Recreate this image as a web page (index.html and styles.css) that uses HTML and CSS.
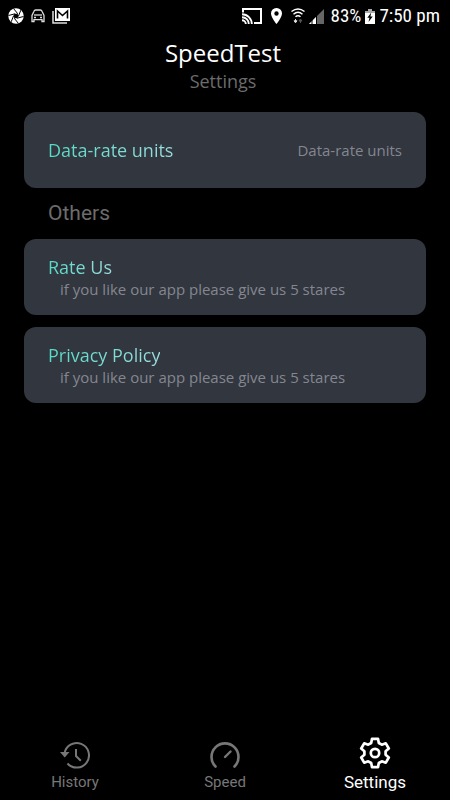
FILE: index.html
```html
<!DOCTYPE html>
<html lang="en">
    <head>
        <meta charset="utf-8">
        <meta name="viewport" content="width=device-width, initial-scale=1">
        <title>SpeedTest</title>
        <link rel="stylesheet" href="styles.css">
    </head>

    <body>
        <div class="status">
            <div class="notifications">
                <svg width="16" height="16" viewBox="0 0 16 16">
                    <circle cx="8" cy="8" r="7.7" fill="#fff"/>
                    <path d="M5.5 .5L9.8 5.8M12.8 2.2L10.4 8.3M15.5 8.5L9 10.2M10.5 15.5L6.2 10.2M3.2 13.8L5.6 7.7M.5 7.5L7 5.8" stroke="#000"/>
                    <path d="M6.6 5.8h2.9l1.1 2.2-1.3 2.2H6.5L5.4 8z" fill="#000"/>
                </svg>
                <svg width="14" height="14" viewBox="0 0 14 14" fill="none" stroke="#ddd" stroke-width="1.3">
                    <path d="M1 12.5v-6l2-4.3Q3.4 1 4.6 1h4.8q1.2 0 1.6 1.2l2 4.3v6h-2v-1.8H3v1.8z"/>
                    <path d="M3 6h8"/>
                    <path d="M3 8.5h2M9 8.5h2"/>
                </svg>
                <svg width="18" height="16" viewBox="0 0 18 16" fill="none">
                    <path d="M1 3v12h14" stroke="#ddd" stroke-width="1.5"/>
                    <path d="M3 0h15v13H3z" fill="#fff"/>
                    <path d="M5.5 10.5V3l5 4.5 5-4.5v7.5" stroke="#000" stroke-width="1.6"/>
                </svg>
            </div>
            <div class="system">
                <svg class="cast" width="20" height="16" viewBox="0 0 20 16" fill="none" stroke="#fff">
                    <path d="M1 4.5V1h18v14h-7" stroke-width="2"/>
                    <path d="M0 6.2A9.8 9.8 0 0 1 9.8 16M0 9.2A6.8 6.8 0 0 1 6.8 16M0 12.2A3.8 3.8 0 0 1 3.8 16" stroke-width="1.9"/>
                </svg>
                <svg class="pin" width="11" height="16" viewBox="0 0 11 16">
                    <path fill="#fff" fill-rule="evenodd" d="M5.5 0A5.4 5.4 0 0 0 0 5.5C0 9.5 5.5 16 5.5 16S11 9.5 11 5.5A5.4 5.4 0 0 0 5.5 0zm0 3.3a2.2 2.2 0 1 1 0 4.4 2.2 2.2 0 0 1 0-4.4z"/>
                </svg>
                <svg width="14" height="16" viewBox="0 0 14 16" fill="none" stroke="#fff" stroke-width="1.5">
                    <path d="M.5 3.5q6.5-5 13 0M2.5 6.2q4.5-4 9 0M4.5 8.8q2.5-2.2 5 0"/>
                    <path d="M4.5 11v2.5M3 12.8l1.5 2 1.5-2z" fill="#ddd" stroke="#ddd" stroke-width="1"/>
                    <path d="M9.5 15v-3M8 13l1.5-2 1.5 2z" fill="#555" stroke="#555" stroke-width="1"/>
                </svg>
                <svg class="signal" width="15" height="15" viewBox="0 0 15 15">
                    <path d="M15 0v15H0z" fill="#666"/>
                    <path d="M7 8v7H0z" fill="#fff"/>
                    <path d="M3 11v4M7.5 7v8" stroke="#000"/>
                </svg>
                <span>83%</span>
                <svg width="10" height="15" viewBox="0 0 10 15">
                    <path d="M3 0h4v2h3v13H0V2h3z" fill="#fff"/>
                    <path d="M0 2h3V0h4v2h3v2H0z" fill="#aaa"/>
                    <path d="M6.3 3.5l-4 5.3h2.2l-1 4.2 4.2-5.5H5.4z" fill="#000"/>
                </svg>
                <span>7:50 pm</span>
            </div>
        </div>

        <header>
            <h1>SpeedTest</h1>
            <p>Settings</p>
        </header>

        <main>
            <button class="card units">
                <span class="name">Data-rate units</span>
                <span class="info">Data-rate units</span>
            </button>

            <h2>Others</h2>

            <button class="card">
                <span class="name">Rate Us</span>
                <span class="info">if you like our app please give us 5 stares</span>
            </button>

            <button class="card">
                <span class="name">Privacy Policy</span>
                <span class="info">if you like our app please give us 5 stares</span>
            </button>
        </main>

        <nav>
            <a href="#history">
                <svg width="30" height="28" viewBox="0 0 30 28" fill="none" stroke="currentColor" stroke-width="2">
                    <path d="M4.5 12.5A12.3 12.3 0 1 1 7.5 22.5"/>
                    <path d="M0 11h9.5l-4.8 5.5z" fill="currentColor" stroke="none"/>
                    <path d="M16 8v7l4.8 4.8"/>
                </svg>
                <span>History</span>
            </a>
            <a href="#speed">
                <svg width="30" height="28" viewBox="0 0 30 28" fill="none" stroke="currentColor" stroke-linecap="round">
                    <path d="M5.5 25.5A13.5 13.5 0 1 1 24.5 25.5" stroke-width="2.6"/>
                    <path d="M15 16l5.5-5.5" stroke-width="2.4"/>
                </svg>
                <span>Speed</span>
            </a>
            <a href="#settings" class="active">
                <svg width="32" height="32" viewBox="-16 -16 32 32" fill="none" stroke="currentColor" stroke-width="2.7" stroke-linejoin="round">
                    <path d="M-3-14.2H3L3.8-10L6.8-8.3L10.8-9.7L13.8-4.5L10.6-1.7V1.7L13.8 4.5L10.8 9.7L6.8 8.3L3.8 10L3 14.2H-3L-3.8 10L-6.8 8.3L-10.8 9.7L-13.8 4.5L-10.6 1.7V-1.7L-13.8-4.5L-10.8-9.7L-6.8-8.3L-3.8-10z"/>
                    <circle r="4.2"/>
                </svg>
                <span>Settings</span>
            </a>
        </nav>
    </body>
</html>
```
FILE: styles.css
```css
* {
    box-sizing: border-box;
}

body {
    margin: 0;
    min-height: 100vh;
    display: flex;
    flex-direction: column;
    background: #000;
    color: #fff;
    font-family: "Open Sans", "Noto Sans", sans-serif;
}

.status {
    display: flex;
    justify-content: space-between;
    align-items: center;
    height: 32px;
    padding: 0 10px 0 8px;
    font: 19px/32px "Roboto Condensed", Roboto, sans-serif;
}

.notifications,
.system {
    display: flex;
    align-items: center;
}

.notifications {
    gap: 7px;
}

.system {
    gap: 4px;
}

.cast,
.pin {
    margin-right: 5px;
}

.signal {
    margin-right: 3px;
}

header {
    padding: 7px 4px 0 0;
    text-align: center;
}

h1 {
    margin: 0;
    font-size: 24px;
    line-height: 28px;
    font-weight: 400;
}

header p {
    margin: 0;
    color: #6c6c6c;
    font-size: 18px;
    line-height: 28px;
}

main {
    flex: 1;
    display: flex;
    flex-direction: column;
    gap: 12px;
    padding: 17px 24px;
}

h2 {
    margin: 0 24px;
    color: #6c6c6c;
    font: 21px/27px Roboto, sans-serif;
}

.card {
    display: flex;
    flex-direction: column;
    align-items: flex-start;
    justify-content: center;
    min-height: 76px;
    padding: 2px 24px 0;
    border: 0;
    border-radius: 12px;
    background: #32363f;
    font-family: inherit;
}

.name {
    background: linear-gradient(90deg, #55dcc8, #9cdde0);
    -webkit-background-clip: text;
    background-clip: text;
    color: transparent;
    font-size: 18px;
    line-height: 22px;
}

.info {
    margin-left: 12px;
    color: #848790;
    font-size: 15px;
    line-height: 22px;
}

.units {
    flex-direction: row;
    align-items: center;
    justify-content: space-between;
    padding-top: 0;
}

nav {
    display: flex;
    align-items: flex-end;
    padding-bottom: 8px;
    font: 15px/20px Roboto, sans-serif;
}

nav a {
    flex: 1;
    display: flex;
    flex-direction: column;
    align-items: center;
    gap: 3px;
    color: #777;
    text-decoration: none;
}

nav .active {
    color: #fff;
    font-size: 17px;
}
```
